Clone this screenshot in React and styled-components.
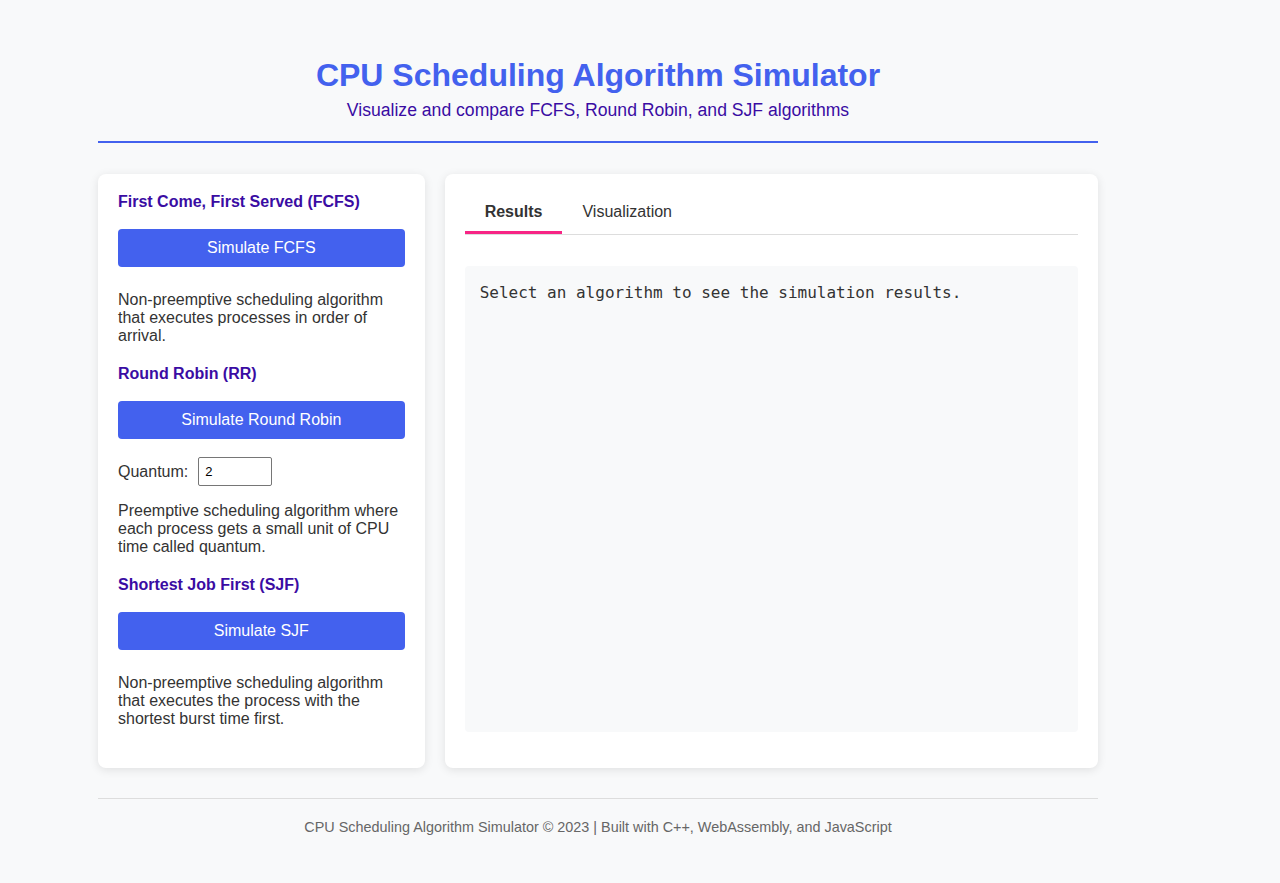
import React, { useState } from "react";
import styled, { createGlobalStyle } from "styled-components";

const GlobalStyle = createGlobalStyle`
  * { box-sizing: border-box; }
  body {
    margin: 0;
    background: #f8f9fa;
    font-family: "Liberation Sans", Arial, sans-serif;
    color: #333;
  }
`;

const Page = styled.div`
  width: 1000px;
  margin-left: 98px;
`;

const Header = styled.header`
  padding: 57px 0 21px;
  border-bottom: 2px solid #4361ee;
  margin-bottom: 31px;
  text-align: center;
`;

const Title = styled.h1`
  margin: 0;
  font-size: 32px;
  line-height: 37px;
  font-weight: 700;
  color: #4361ee;
`;

const Subtitle = styled.p`
  margin: 6px 0 0;
  font-size: 17.6px;
  line-height: 20px;
  color: #3a0ca3;
`;

const Layout = styled.main`
  display: grid;
  grid-template-columns: 1fr 2fr;
  gap: 20px;
`;

const Card = styled.section`
  background: #fff;
  border-radius: 8px;
  box-shadow: 0 2px 10px rgba(0, 0, 0, 0.1);
  padding: ${(p) => (p.$side ? "19px 20px 20px" : "20px 20px 36px")};
`;

const AlgoSection = styled.div`
  display: flex;
  flex-direction: column;
  & + & { margin-top: 20px; }
`;

const AlgoTitle = styled.h3`
  margin: 0 0 18px;
  font-size: 16px;
  line-height: 18px;
  font-weight: 700;
  color: #3a0ca3;
`;

const SimButton = styled.button`
  display: block;
  width: 100%;
  height: 38px;
  border: none;
  border-radius: 4px;
  background: #4361ee;
  color: #fff;
  font-family: "Liberation Sans", Arial, sans-serif;
  font-size: 16px;
  cursor: pointer;
`;

const Controls = styled.div`
  display: flex;
  align-items: center;
  margin-top: 18px;
  font-size: 16px;
  line-height: 18px;
`;

const QuantumInput = styled.input`
  width: 74px;
  height: 29px;
  margin-left: 10px;
  padding: 0 6px;
  border: 1px solid #767676;
  border-radius: 2px;
  font-family: "Liberation Sans", Arial, sans-serif;
  font-size: 13px;
  color: #000;
  background: #fff;
`;

const Description = styled.p`
  margin: ${(p) => (p.$afterControls ? "16px" : "24px")} 0 0;
  font-size: 16px;
  line-height: 18px;
  color: #333;
`;

const TabList = styled.div`
  display: flex;
  border-bottom: 1px solid #ddd;
`;

const Tab = styled.button`
  padding: 8px 20px 10px;
  border: none;
  border-bottom: 3px solid ${(p) => (p.$active ? "#f72585" : "transparent")};
  background: none;
  font-family: "Liberation Sans", Arial, sans-serif;
  font-size: 16px;
  line-height: 19px;
  font-weight: ${(p) => (p.$active ? 700 : 400)};
  color: #333;
  cursor: pointer;
`;

const ResultsBox = styled.pre`
  margin: 31px 0 0;
  height: 466px;
  padding: 15px;
  background: #f8f9fa;
  border-radius: 4px;
  font-family: "DejaVu Sans Mono", "Liberation Mono", monospace;
  font-size: 16px;
  line-height: 24px;
  color: #333;
  white-space: pre-wrap;
`;

const Footer = styled.footer`
  margin-top: 30px;
  padding: 20px 0;
  border-top: 1px solid #ddd;
  text-align: center;
  font-family: "Liberation Sans", Arial, sans-serif;
  font-size: 14.4px;
  line-height: 16px;
  color: #666;
`;

const algorithms = [
  {
    id: "fcfs",
    title: "First Come, First Served (FCFS)",
    button: "Simulate FCFS",
    text: "Non-preemptive scheduling algorithm that executes processes in order of arrival.",
  },
  {
    id: "rr",
    title: "Round Robin (RR)",
    button: "Simulate Round Robin",
    quantum: true,
    text: "Preemptive scheduling algorithm where each process gets a small unit of CPU time called quantum.",
  },
  {
    id: "sjf",
    title: "Shortest Job First (SJF)",
    button: "Simulate SJF",
    text: "Non-preemptive scheduling algorithm that executes the process with the shortest burst time first.",
  },
];

export default function App() {
  const [tab, setTab] = useState("results");
  const [quantum, setQuantum] = useState("2");

  return (
    <>
      <GlobalStyle />
      <Page>
        <Header>
          <Title>CPU Scheduling Algorithm Simulator</Title>
          <Subtitle>Visualize and compare FCFS, Round Robin, and SJF algorithms</Subtitle>
        </Header>

        <Layout>
          <Card $side>
            {algorithms.map((a) => (
              <AlgoSection key={a.id}>
                <AlgoTitle>{a.title}</AlgoTitle>
                <SimButton>{a.button}</SimButton>
                {a.quantum && (
                  <Controls>
                    <label htmlFor="quantum">Quantum:</label>
                    <QuantumInput
                      id="quantum"
                      type="text"
                      value={quantum}
                      onChange={(e) => setQuantum(e.target.value)}
                    />
                  </Controls>
                )}
                <Description $afterControls={a.quantum}>{a.text}</Description>
              </AlgoSection>
            ))}
          </Card>

          <Card>
            <TabList>
              <Tab $active={tab === "results"} onClick={() => setTab("results")}>Results</Tab>
              <Tab $active={tab === "viz"} onClick={() => setTab("viz")}>Visualization</Tab>
            </TabList>
            <ResultsBox>Select an algorithm to see the simulation results.</ResultsBox>
          </Card>
        </Layout>

        <Footer>
          CPU Scheduling Algorithm Simulator © 2023 | Built with C++, WebAssembly, and JavaScript
        </Footer>
      </Page>
    </>
  );
}
